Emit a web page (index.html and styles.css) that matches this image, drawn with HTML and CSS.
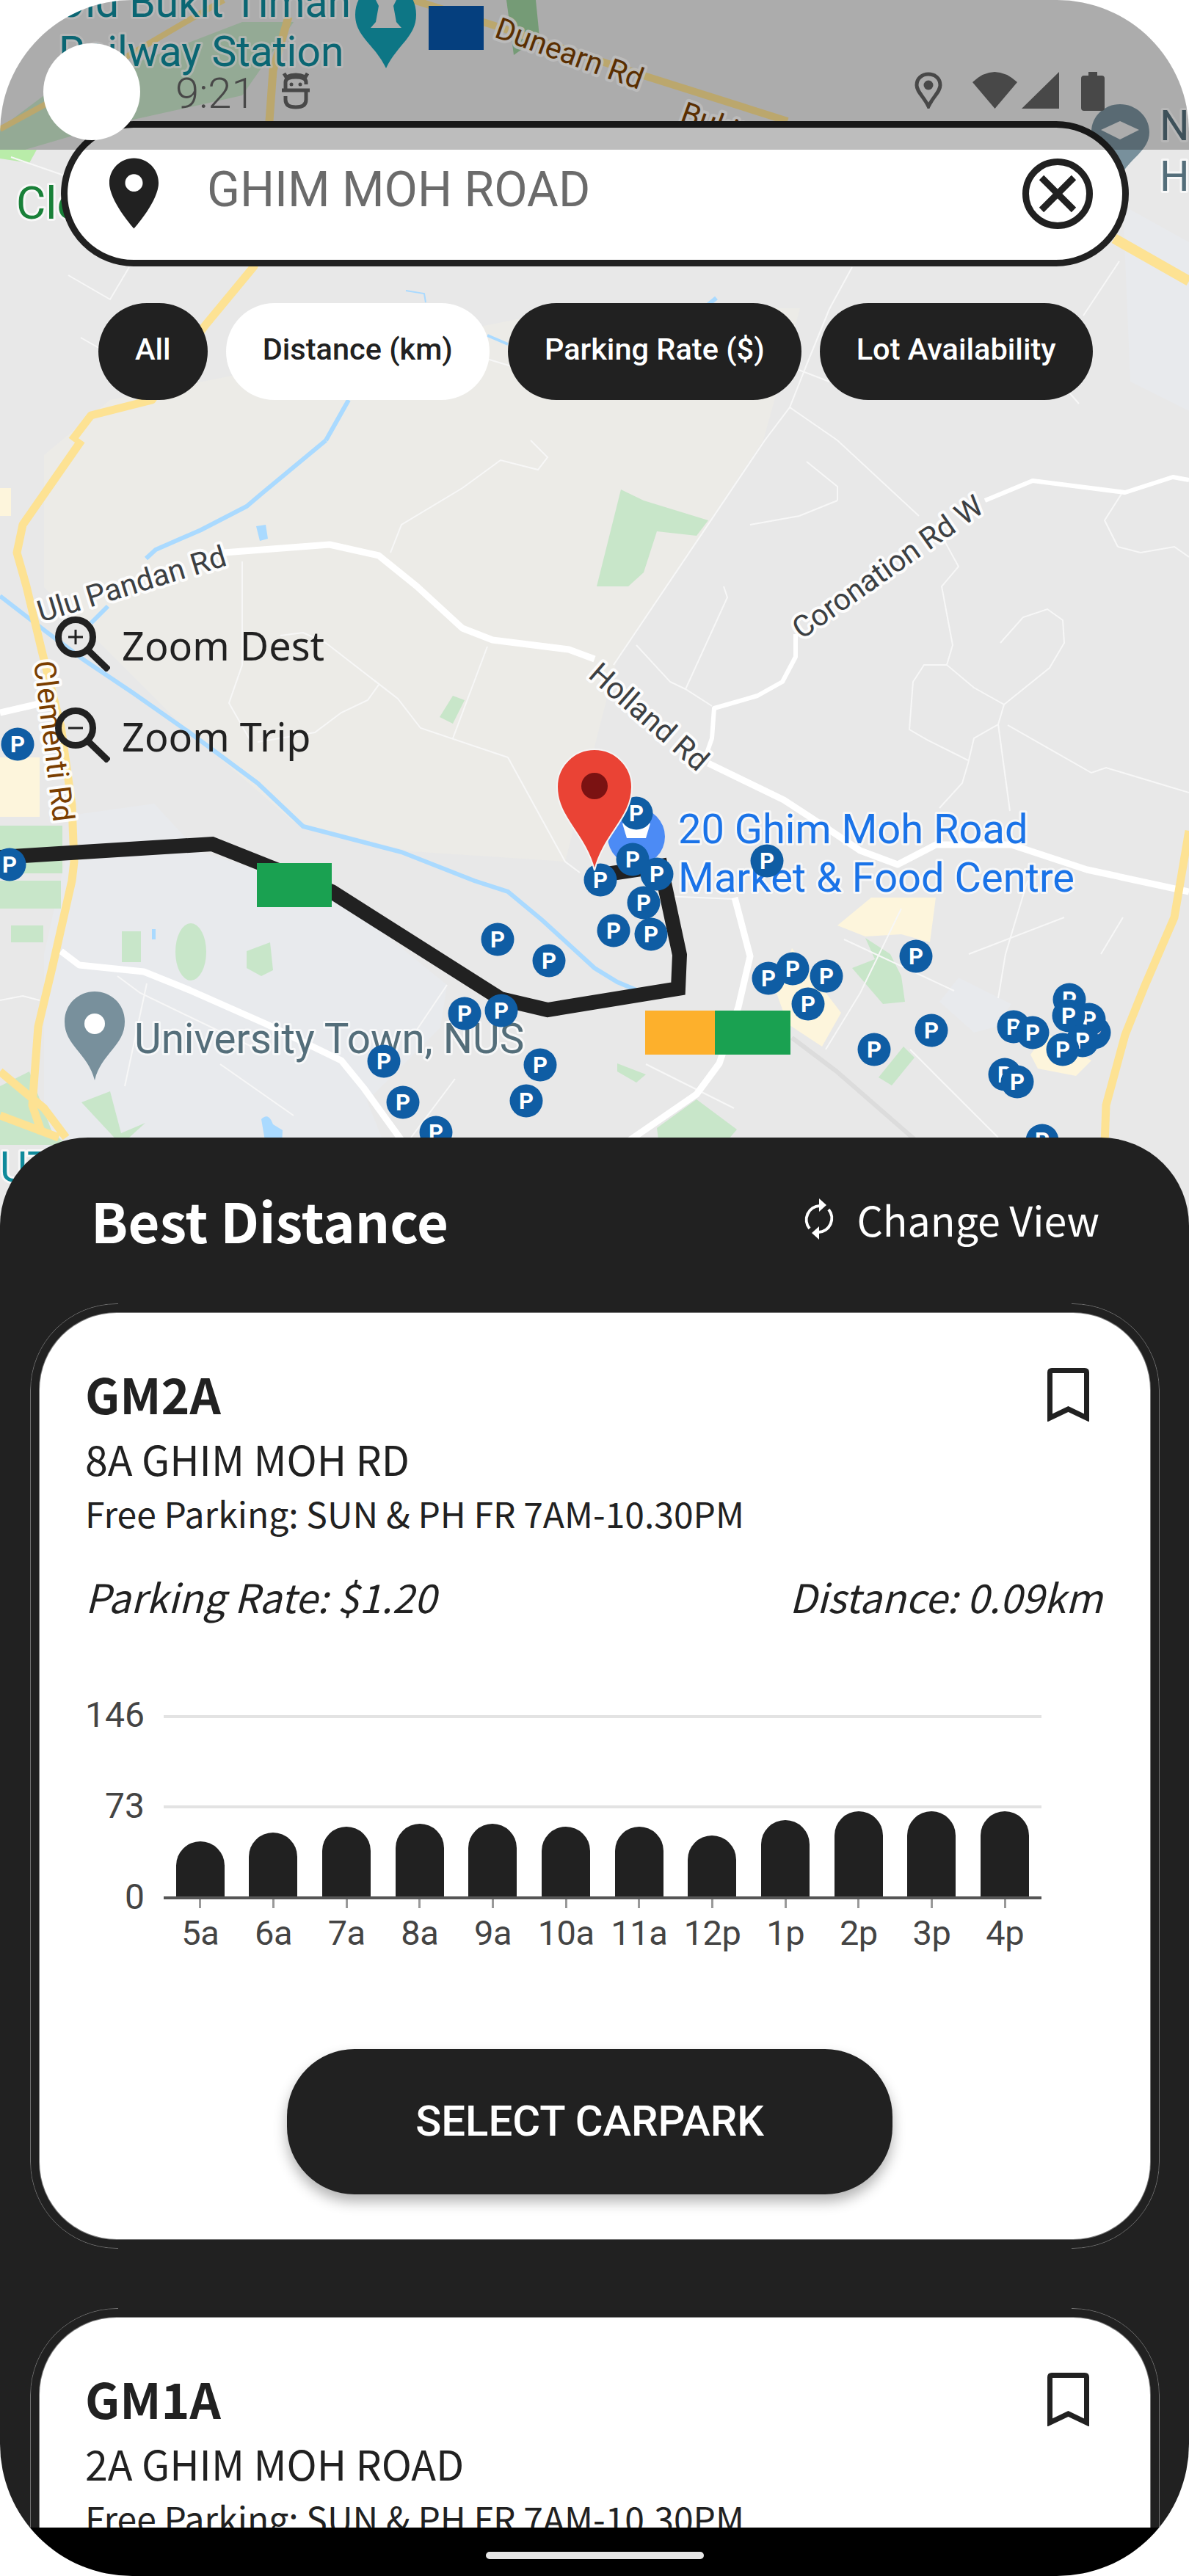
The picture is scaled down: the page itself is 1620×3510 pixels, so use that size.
FILE: index.html
```html
<!DOCTYPE html>
<html lang="en">
<head>
<meta charset="UTF-8">
<meta name="viewport" content="width=device-width, initial-scale=1.0">
<title>Carpark Finder</title>
<link rel="stylesheet" href="styles.css">
</head>
<body>
  <div class="phone">
    <!-- map is a free canvas, everything on it sits at its own coordinates -->
    <svg class="map" viewBox="0 0 1620 3510" xmlns="http://www.w3.org/2000/svg">
      <defs>
        <g id="pk">
          <circle r="22.5" fill="#0f5da4"/>
          <text class="pk-letter" y="11">P</text>
        </g>
      </defs>
      <rect width="1620" height="1700" fill="#e8e8e8"/>
      <!-- land use -->
      <g fill="#ecebe7">
        <path d="M150 545 L780 420 L1090 420 L1040 600 L840 900 L770 1174 L560 1160 L400 1120 L250 990 L60 800 L60 620 Z"/>
      </g>
      <g fill="#e8eaed">
        <path d="M103 1110 L210 1095 L270 1160 L452 1215 L609 1342 L600 1400 L500 1500 L548 1620 L60 1620 L60 1300 Z"/>
        <path d="M1280 1365 L1306 1332 L1378 1368 L1357 1399 L1327 1407 Z"/>
        <path d="M1530 280 L1620 330 L1620 560 L1540 520 Z"/>
      </g>
      <g fill="#fdf5dc">
        <path d="M0 1032 H54 V1113 H0 Z"/>
        <path d="M0 665 H15 V703 H0 Z"/>
        <path d="M1141 1261 L1187 1223 L1275 1223 L1267 1284 L1228 1273 L1179 1276 Z"/>
        <path d="M1058 1353 L1079 1292 L1146 1380 L1120 1426 L1073 1395 Z"/>
        <path d="M1404 1437 L1425 1407 L1487 1445 L1466 1466 L1414 1456 Z"/>
      </g>
      <g fill="#c8e6c9">
        <path d="M846 667 L877 682 L965 709 L949 730 L895 724 L877 780 L856 799 L813 799 Z"/>
        <path d="M617 948 L633 954 L617 986 L599 977 Z"/>
        <path d="M166 1269 H192 V1311 H166 Z"/>
        <ellipse cx="260" cy="1297" rx="21" ry="39"/>
        <path d="M336 1296 L368 1284 L372 1322 L356 1330 L336 1319 Z"/>
        <path d="M111 1502 L150 1487 L165 1544 L198 1530 L165 1560 Z"/>
        <path d="M0 1200 H83 V1238 H0 Z"/>
        <path d="M15 1261 H59 V1284 H15 Z"/>
        <path d="M0 1480 L40 1460 L70 1540 L90 1560 L0 1560 Z"/>
        <path d="M1179 1278 L1213 1300 L1228 1330 L1233 1365 L1203 1368 L1161 1319 L1192 1307 Z"/>
        <path d="M1231 1426 L1246 1441 L1215 1479 L1197 1468 Z"/>
        <path d="M949 1498 L1004 1539 L986 1560 L898 1560 L895 1537 Z"/>
        <path d="M841 1449 L880 1464 L867 1475 L841 1460 Z"/>
        <path d="M0 1125 H85 V1190 H0 Z" fill="#c5e6c6"/>
        <path d="M690 0 H730 L735 50 L700 75 Z" fill="#9ed19f"/>
        <path d="M0 175 L60 130 L200 80 L330 30 L400 30 L330 130 L150 170 L0 214 Z"/>
        <path d="M0 204 H50 L40 222 L0 216 Z" fill="#b9eca9"/>
      </g>
      <!-- water -->
      <g fill="none" stroke="#aadaff" stroke-width="6">
        <path d="M444 600 L403 634 L356 673 L336 690 L274 722 L212 749 L199 761"/>
        <path d="M147 826 L124 849"/>
        <path d="M0 812 L62 860 L114 899 L181 944 L258 998 L351 1067 L413 1126 L547 1161 L646 1200 L692 1215 L739 1254 L810 1319 L841 1338 L867 1349"/>
        <path d="M444 600 L475 545"/>
        <path d="M664 457 L692 469" stroke-width="4"/>
        <path d="M553 396 L578 400 L580 412" stroke-width="2"/>
        <path d="M965 415 L976 406" stroke-width="6"/>
      </g>
      <path d="M349 717 L362 715 L365 734 L354 737 Z" fill="#aadaff"/>
      <path d="M356 1525 Q366 1515 372 1532 L385 1540 L384 1560 L362 1560 Z" fill="#aadaff"/>
      <path d="M207 1266 H212 V1280 H207 Z" fill="#aadaff"/>
      <!-- minor roads -->
      <g fill="none" stroke="#f7f7f7" stroke-width="2">
        <path d="M93 375 L150 408 L176 364"/>
        <path d="M15 214 L90 240"/>
        <path d="M1161 364 L1130 421 L1099 497 L1076 555 L1042 600 L836 906"/>
        <path d="M1076 555 L1141 600 L1252 703"/>
        <path d="M1476 430 L1525 356"/>
        <path d="M1283 730 L1306 772 L1283 799 L1298 879 L1290 906 L1327 937 L1368 960 L1360 987 L1327 1006 L1319 1040 L1311 1067 L1280 1101"/>
        <path d="M1360 987 L1376 1105"/>
        <path d="M1373 988 L1487 1053 L1507 1046 L1620 1080"/>
        <path d="M1523 745 L1505 709 L1528 673"/>
        <path d="M1523 745 L1554 753 L1600 745 L1620 759"/>
        <path d="M1368 960 L1430 910 L1450 876 L1448 845 L1427 830 L1394 841 L1363 876"/>
        <path d="M1141 682 L1089 703 L1022 715"/>
        <path d="M1290 906 L1259 906 L1244 929 L1239 994 L1265 1009 L1319 1036"/>
        <path d="M970 962 L934 939 L913 929 L867 879"/>
        <path d="M934 939 L991 814 L986 799"/>
        <path d="M1099 629 L1141 663 L1141 682"/>
        <path d="M692 1032 L573 992 L542 952 L444 876 L413 862 L382 866"/>
        <path d="M692 1032 L770 1174 L790 1189"/>
        <path d="M516 933 L501 954 L465 971 L429 998 L351 1011"/>
        <path d="M330 765 L330 906 L312 958 L341 1009"/>
        <path d="M664 881 L617 1006"/>
        <path d="M630 665 L547 715 L532 753"/>
        <path d="M630 665 L682 627 L733 640 L746 623 L723 600"/>
        <path d="M0 1363 L31 1357 L54 1363"/>
        <path d="M160 1330 L191 1353 L351 1430"/>
        <path d="M609 1342 L568 1403"/>
        <path d="M1125 1430 L1172 1353 L1228 1238"/>
        <path d="M880 1220 L1000 1225 M880 1450 L960 1490 L1000 1510"/>
        <path d="M1150 1280 L1300 1350 M1320 1300 L1450 1250 M1500 1300 L1530 1250"/>
        <path d="M1400 1200 L1370 1300 L1360 1360 M1240 1430 L1360 1550"/>
        <path d="M110 460 L180 500 M420 480 L520 420 M720 430 L780 520 M600 470 L700 500"/>
        <path d="M850 520 L1000 440 M1000 470 L1130 520 M1250 470 L1350 520 M1400 470 L1470 550"/>
        <path d="M170 1480 L200 1340 M300 1450 L400 1520 M620 1470 L560 1550"/>
      </g>
      <!-- main roads -->
      <g fill="none" stroke="#fff" stroke-width="9" stroke-linejoin="round">
        <path d="M305 753 L449 742 L516 757 L568 799 L630 856 L671 872 L775 885 L810 898"/>
        <path d="M965 1040 L1068 1090 L1120 1124 L1172 1159 L1223 1178 L1275 1151 L1378 1151 L1481 1185 L1620 1215"/>
        <path d="M83 1296 L108 1315 L196 1324 L258 1349 L362 1395 L465 1445 L496 1483 L548 1555"/>
        <path d="M0 971 L57 958"/>
        <path d="M1001 1223 L1022 1303 L1006 1372 L980 1449 L949 1491 L856 1555"/>
        <path d="M924 1410 L1006 1410 L1060 1420" stroke-width="6"/>
      </g>
      <g fill="none" stroke="#fff" stroke-width="6" stroke-linejoin="round">
        <path d="M1342 682 L1407 655 L1533 671 L1598 650 L1620 654"/>
        <path d="M1084 864 L1084 895 L1066 929 L1032 948 L973 965 L970 1006 L962 1029"/>
        <path d="M1079 1414 L1140 1460 L1249 1555" stroke="#dcdcdc"/>
      </g>
      <!-- motorways -->
      <g fill="none" stroke="#fde293" stroke-width="11" stroke-linejoin="round">
        <path d="M98 600 L124 566 L207 545 L279 444 L346 363 L367 165 L372 96 L393 23"/>
        <path d="M111 600 L31 715 L23 753 L36 799 L57 887 L83 990 L98 1097 L101 1174 L98 1200 L72 1315 L52 1399 L44 1506 L57 1544"/>
        <path d="M0 176 L62 142 L258 27 L305 0" stroke-width="8"/>
        <path d="M563 0 L671 34 L877 103 L1073 165" stroke-width="10"/>
        <path d="M1518 325 L1620 383" stroke-width="14"/>
        <path d="M1620 1132 L1600 1250 L1559 1345 L1533 1410 L1507 1506 L1505 1560"/>
        <path d="M0 1460 L60 1510 L90 1550 M0 1520 L80 1550"/>
      </g>
      <!-- labels -->
      <text class="lbl lbl-teal" x="77" y="23">Old Bukit Timah</text>
      <text class="lbl lbl-teal" x="80" y="90">Railway Station</text>
      <text class="lbl lbl-road-brown" transform="translate(672 50) rotate(20)">Dunearn Rd</text>
      <text class="lbl lbl-road-brown" transform="translate(925 165) rotate(20)">Bukit Timah</text>
      <text class="lbl lbl-green" x="22" y="298">Clementi</text>
      <text class="lbl lbl-slate" x="1580" y="191">N</text>
      <text class="lbl lbl-slate" x="1580" y="260">H</text>
      <text class="lbl lbl-road" transform="translate(56 848) rotate(-17)">Ulu Pandan Rd</text>
      <text class="lbl lbl-road-brown" transform="translate(46 902) rotate(83)">Clementi Rd</text>
      <text class="lbl lbl-road" transform="translate(1092 872) rotate(-35)">Coronation Rd W</text>
      <text class="lbl lbl-road" transform="translate(800 922) rotate(41)">Holland Rd</text>
      <text class="lbl lbl-place" x="924" y="1149">20 Ghim Moh Road</text>
      <text class="lbl lbl-place" x="924" y="1215">Market &amp; Food Centre</text>
      <text class="lbl lbl-slate lbl-campus" x="183" y="1435">University Town, NUS</text>
      <text class="lbl lbl-teal" x="0" y="1610">UT</text>
      <!-- poi pins -->
      <path d="M526 93 C510 60 484 50 484 20 C484 -10 510 -25 526 -25 C542 -25 567 -10 567 20 C567 50 542 60 526 93 Z" fill="#12a0b4"/>
      <path d="M505 38 L512 30 L516 8 L512 0 H540 L536 8 L540 30 L547 38 Z" fill="#e8e8e8"/>
      <path d="M1526 241 C1512 215 1487 205 1487 180 C1487 158 1505 142 1526 142 C1547 142 1566 158 1566 180 C1566 205 1540 215 1526 241 Z" fill="#78909c"/>
      <path d="M1500 177 L1526 165 L1552 177 L1526 190 Z" fill="#e8e8e8"/>
      <path d="M129 1472 C120 1435 88 1425 88 1392 C88 1368 107 1351 129 1351 C151 1351 170 1368 170 1392 C170 1425 138 1435 129 1472 Z" fill="#78909c"/>
      <circle cx="129" cy="1395" r="14" fill="#fff"/>
      <circle cx="867" cy="1140" r="39" fill="#4c8bf5"/>
      <path d="M848 1122 H886 L880 1142 H854 Z" fill="#fff"/>
      <!-- route and congestion blocks -->
      <path d="M0 1168 L289 1150 L452 1215 L682 1361 L746 1376 L924 1347 L926 1301 L900 1180 L820 1192" fill="none" stroke="#212121" stroke-width="20" stroke-linejoin="miter"/>
      <rect x="350" y="1176" width="102" height="60" fill="#1aa151"/>
      <rect x="879" y="1377" width="95" height="60" fill="#fdb02c"/>
      <rect x="974" y="1377" width="103" height="60" fill="#1aa151"/>
      <rect x="584" y="8" width="75" height="60" fill="#0755ab"/>
      <!-- parking markers -->
      <use href="#pk" x="24" y="1014"/>
      <use href="#pk" x="13" y="1178"/>
      <use href="#pk" x="867" y="1108"/>
      <use href="#pk" x="862" y="1171"/>
      <use href="#pk" x="1045" y="1173"/>
      <use href="#pk" x="818" y="1199"/>
      <use href="#pk" x="895" y="1191"/>
      <use href="#pk" x="877" y="1230"/>
      <use href="#pk" x="836" y="1268"/>
      <use href="#pk" x="887" y="1273"/>
      <use href="#pk" x="678" y="1280"/>
      <use href="#pk" x="748" y="1309"/>
      <use href="#pk" x="633" y="1381"/>
      <use href="#pk" x="683" y="1377"/>
      <use href="#pk" x="523" y="1446"/>
      <use href="#pk" x="736" y="1451"/>
      <use href="#pk" x="549" y="1502"/>
      <use href="#pk" x="717" y="1500"/>
      <use href="#pk" x="594" y="1543"/>
      <use href="#pk" x="1047" y="1333"/>
      <use href="#pk" x="1080" y="1320"/>
      <use href="#pk" x="1126" y="1330"/>
      <use href="#pk" x="1101" y="1368"/>
      <use href="#pk" x="1248" y="1303"/>
      <use href="#pk" x="1269" y="1404"/>
      <use href="#pk" x="1191" y="1430"/>
      <use href="#pk" x="1381" y="1399"/>
      <use href="#pk" x="1407" y="1407"/>
      <use href="#pk" x="1369" y="1464"/>
      <use href="#pk" x="1386" y="1474"/>
      <use href="#pk" x="1457" y="1362"/>
      <use href="#pk" x="1491" y="1407"/>
      <use href="#pk" x="1484" y="1389"/>
      <use href="#pk" x="1456" y="1384"/>
      <use href="#pk" x="1475" y="1418"/>
      <use href="#pk" x="1448" y="1430"/>
      <use href="#pk" x="1420" y="1554"/>
      <!-- destination pin -->
      <path d="M810 1186 C797 1135 759 1115 759 1072 A51 51 0 0 1 861 1072 C861 1115 823 1135 810 1186 Z" fill="#ea4335" stroke="#f4f4f4" stroke-width="2"/>
      <circle cx="810" cy="1071" r="18" fill="#7b1212"/>
    </svg>

    <div class="status">
      <span class="time">9:21</span>
      <svg class="status-app" viewBox="0 0 38 51">
        <path d="M3 2 L6 7 Q19 1 32 7 L35 2 M5 25 V14 Q5 7 19 7 Q33 7 33 14 V17 M0 25 H38 M33 25 V38 Q33 48 19 48 Q5 48 5 38 V33" fill="none" stroke="currentColor" stroke-width="5"/>
        <circle cx="13" cy="17" r="2.5" fill="currentColor"/>
        <circle cx="25" cy="17" r="2.5" fill="currentColor"/>
      </svg>
      <div class="status-right">
        <svg class="status-pin" viewBox="0 0 38 50">
          <path d="M19 47 C13 34 3 27 3 18 C3 9 10 3 19 3 C28 3 35 9 35 18 C35 27 25 34 19 47 Z" fill="none" stroke="currentColor" stroke-width="5"/>
          <circle cx="19" cy="18" r="6.5" fill="currentColor"/>
        </svg>
        <svg class="status-wifi" viewBox="0 0 61 50"><path d="M0 14 Q30 -14 61 14 L30.5 50 Z" fill="currentColor"/></svg>
        <svg class="status-signal" viewBox="0 0 51 50"><path d="M51 0 V50 H0 Z" fill="currentColor"/></svg>
        <svg class="status-battery" viewBox="0 0 32 53"><path d="M10 0 H22 V5 H28 Q32 5 32 9 V49 Q32 53 28 53 H4 Q0 53 0 49 V9 Q0 5 4 5 H10 Z" fill="currentColor"/></svg>
      </div>
    </div>
    <div class="camera"></div>

    <div class="map-ui">
      <div class="search">
        <svg class="search-pin" viewBox="0 0 24 24"><path d="M12 2C8.13 2 5 5.13 5 9c0 5.25 7 13 7 13s7-7.75 7-13c0-3.87-3.13-7-7-7zm0 9.5c-1.38 0-2.5-1.12-2.5-2.5s1.12-2.5 2.5-2.5 2.5 1.12 2.5 2.5-1.12 2.5-2.5 2.5z"/></svg>
        <span class="search-text">GHIM MOH ROAD</span>
        <svg class="search-clear" viewBox="0 0 96 96">
          <circle cx="48" cy="48" r="43.5" fill="none" stroke="#212121" stroke-width="9"/>
          <path d="M26 26 L70 70 M70 26 L26 70" stroke="#212121" stroke-width="9"/>
        </svg>
      </div>
      <div class="chips">
        <div class="chip">All</div>
        <div class="chip chip-active">Distance (km)</div>
        <div class="chip">Parking Rate ($)</div>
        <div class="chip">Lot Availability</div>
      </div>
      <div class="zoom-list">
        <div class="zoom-item">
          <svg class="zoom-icon" viewBox="0 0 75 75">
            <circle cx="28" cy="28" r="23.5" fill="none" stroke="#212121" stroke-width="9"/>
            <path d="M45 46 L73 73" stroke="#212121" stroke-width="9"/>
            <path d="M18 28 H38 M28 18 V38" stroke="#212121" stroke-width="3"/>
          </svg>
          <span>Zoom Dest</span>
        </div>
        <div class="zoom-item">
          <svg class="zoom-icon" viewBox="0 0 75 75">
            <circle cx="28" cy="28" r="23.5" fill="none" stroke="#212121" stroke-width="9"/>
            <path d="M45 46 L73 73" stroke="#212121" stroke-width="9"/>
            <path d="M18 28 H38" stroke="#212121" stroke-width="3"/>
          </svg>
          <span>Zoom Trip</span>
        </div>
      </div>
    </div>

    <div class="panel">
      <div class="panel-header">
        <h1 class="panel-title">Best Distance</h1>
        <div class="change-view">
          <svg class="sync-icon" viewBox="0 0 42 56">
            <path d="M8 41 A19 19 0 0 1 22 10 M34 15 A19 19 0 0 1 20 46" fill="none" stroke="#fff" stroke-width="4"/>
            <path d="M21 0 V18 L31 9 Z M21 38 V56 L11 47 Z" fill="#fff"/>
          </svg>
          <span>Change View</span>
        </div>
      </div>

      <div class="card-wrap">
        <div class="card">
          <div class="card-top">
            <div class="card-name">GM2A</div>
            <svg class="bookmark" viewBox="0 0 57 73"><path d="M3.5 6 Q3.5 3.5 6 3.5 H51 Q53.5 3.5 53.5 6 V68 L28.5 56 L3.5 68 Z" fill="none" stroke="#212121" stroke-width="7"/></svg>
          </div>
          <div class="card-address">8A GHIM MOH RD</div>
          <div class="card-free">Free Parking: SUN &amp; PH FR 7AM-10.30PM</div>
          <div class="card-meta">
            <span>Parking Rate: $1.20</span>
            <span>Distance: 0.09km</span>
          </div>
          <div class="chart">
            <div class="y-axis"><span>146</span><span>73</span><span>0</span></div>
            <div class="chart-main">
              <div class="plot">
                <div class="grid-line grid-top"></div>
                <div class="grid-line grid-mid"></div>
                <div class="bars">
                  <div class="bar" style="height:75px"></div>
                  <div class="bar" style="height:87px"></div>
                  <div class="bar" style="height:95px"></div>
                  <div class="bar" style="height:99px"></div>
                  <div class="bar" style="height:99px"></div>
                  <div class="bar" style="height:95px"></div>
                  <div class="bar" style="height:95px"></div>
                  <div class="bar" style="height:83px"></div>
                  <div class="bar" style="height:104px"></div>
                  <div class="bar" style="height:116px"></div>
                  <div class="bar" style="height:116px"></div>
                  <div class="bar" style="height:116px"></div>
                </div>
              </div>
              <div class="x-axis">
                <span>5a</span><span>6a</span><span>7a</span><span>8a</span><span>9a</span><span>10a</span>
                <span>11a</span><span>12p</span><span>1p</span><span>2p</span><span>3p</span><span>4p</span>
              </div>
            </div>
          </div>
          <div class="select-btn">SELECT CARPARK</div>
        </div>
      </div>

      <div class="card-wrap">
        <div class="card">
          <div class="card-top">
            <div class="card-name">GM1A</div>
            <svg class="bookmark" viewBox="0 0 57 73"><path d="M3.5 6 Q3.5 3.5 6 3.5 H51 Q53.5 3.5 53.5 6 V68 L28.5 56 L3.5 68 Z" fill="none" stroke="#212121" stroke-width="7"/></svg>
          </div>
          <div class="card-address">2A GHIM MOH ROAD</div>
          <div class="card-free">Free Parking: SUN &amp; PH FR 7AM-10.30PM</div>
        </div>
      </div>
    </div>

    <div class="navbar"><div class="home-bar"></div></div>
  </div>
</body>
</html>
```

FILE: styles.css
```css
html, body {
  margin: 0;
  padding: 0;
  background: #fff;
}

.phone {
  position: relative;
  width: 1620px;
  height: 3510px;
  overflow: hidden;
  border-radius: 180px;
  display: flex;
  flex-direction: column;
  font-family: Roboto, sans-serif;
  color: #212121;
}

/* map */
.map {
  position: absolute;
  top: 0;
  left: 0;
  width: 1620px;
  height: 3510px;
}

.lbl {
  font-family: Roboto, sans-serif;
  font-size: 57px;
  paint-order: stroke;
  stroke: rgba(255, 255, 255, 0.65);
  stroke-width: 6px;
  stroke-linejoin: round;
}

.lbl-teal { fill: #0e8a9b; }
.lbl-green { fill: #188038; font-size: 62px; }
.lbl-slate { fill: #546e7a; }
.lbl-campus { font-size: 56.5px; }
.lbl-place { fill: #1a73e8; font-size: 56px; }
.lbl-road { fill: #3c4043; font-size: 41px; stroke: rgba(255, 255, 255, 0.9); stroke-width: 8px; }
.lbl-road-brown { fill: #7a3e00; font-size: 41px; stroke: rgba(255, 255, 255, 0.9); stroke-width: 8px; }

.pk-letter {
  font-family: Roboto, sans-serif;
  font-size: 31px;
  font-weight: 700;
  fill: #fff;
  text-anchor: middle;
}

/* status bar, dims the map and the top of the search box */
.status {
  position: absolute;
  top: 0;
  left: 0;
  right: 0;
  height: 204px;
  box-sizing: border-box;
  padding: 98px 115px 0 239px;
  display: flex;
  align-items: flex-start;
  background: rgba(0, 0, 0, 0.26);
  color: #484848;
  z-index: 3;
}

.time {
  font-size: 58px;
  font-weight: 300;
  line-height: 58px;
}

.status-app {
  width: 38px;
  height: 51px;
  margin-left: 36px;
}

.status-right {
  margin-left: auto;
  display: flex;
  align-items: flex-start;
}

.status-pin { width: 38px; height: 50px; }
.status-wifi { width: 61px; height: 50px; margin-left: 41px; }
.status-signal { width: 51px; height: 50px; margin-left: 6px; }
.status-battery { width: 32px; height: 53px; margin-left: 30px; }

.camera {
  position: absolute;
  top: 59px;
  left: 59px;
  width: 132px;
  height: 132px;
  border-radius: 50%;
  background: #fff;
  z-index: 4;
}

/* controls on top of the map */
.map-ui {
  position: relative;
  height: 1550px;
  flex-shrink: 0;
  box-sizing: border-box;
  padding: 165px 0 0 83px;
  z-index: 2;
}

.search {
  width: 1455px;
  height: 198px;
  box-sizing: border-box;
  border: 9px solid #212121;
  border-radius: 99px;
  background: #fff;
  display: flex;
  align-items: center;
  padding-left: 33px;
  padding-right: 40px;
}

.search-pin {
  width: 115px;
  height: 115px;
  fill: #212121;
  margin-top: -1px;
}

.search-text {
  font-size: 66px;
  color: #6b6b6b;
  margin-left: 42px;
  margin-top: -12px;
}

.search-clear {
  width: 96px;
  height: 96px;
  margin-left: auto;
}

.chips {
  display: flex;
  gap: 25px;
  margin: 50px 0 0 51px;
}

.chip {
  height: 132px;
  box-sizing: border-box;
  padding: 0 50px;
  border-radius: 66px;
  background: #212121;
  color: #fff;
  font-size: 41.5px;
  font-weight: 500;
  line-height: 126px;
}

.chip-active {
  background: #fff;
  color: #212121;
}

.zoom-list {
  margin: 295px 0 0 -8px;
}

.zoom-item {
  height: 124px;
  display: flex;
  align-items: flex-start;
  font-family: "Noto Sans", sans-serif;
  font-size: 54px;
  line-height: 78px;
}

.zoom-icon {
  width: 75px;
  height: 75px;
  margin-right: 16px;
}

/* bottom sheet */
.panel {
  position: relative;
  flex: 1;
  min-height: 0;
  overflow: hidden;
  border-radius: 120px 120px 0 0;
  background: #212121;
  font-family: "Noto Sans CJK SC", "Noto Sans", sans-serif;
  z-index: 2;
}

.panel-header {
  height: 226px;
  box-sizing: border-box;
  padding: 0 122px 4px 124px;
  display: flex;
  align-items: center;
  justify-content: space-between;
  color: #fff;
}

.panel-title {
  margin: 0;
  font-size: 74px;
  font-weight: 700;
}

.change-view {
  display: flex;
  align-items: center;
  font-size: 55.5px;
}

.sync-icon {
  width: 42px;
  height: 56px;
  margin-right: 30px;
}

.card-wrap {
  position: relative;
  margin: 0 40px 81px 41px;
  padding: 13px;
}

/* thin ring round the card, only shows at the corners and the sides */
.card-wrap::before {
  content: "";
  position: absolute;
  top: 0;
  left: 0;
  right: 0;
  bottom: 0;
  border: 1px solid #6f6f6f;
  border-radius: 118px;
  -webkit-mask-image: linear-gradient(to right, #000 120px, transparent 120px, transparent calc(100% - 120px), #000 calc(100% - 120px));
  mask-image: linear-gradient(to right, #000 120px, transparent 120px, transparent calc(100% - 120px), #000 calc(100% - 120px));
}

.card {
  position: relative;
  height: 1262px;
  box-sizing: border-box;
  padding: 69px 83px 0 62px;
  border-radius: 105px;
  background: #fff;
  box-shadow: 0 0 0 1px #777;
}

.card-top {
  display: flex;
  justify-content: space-between;
  align-items: flex-start;
}

.card-name {
  font-size: 66px;
  font-weight: 700;
  line-height: 80px;
}

.bookmark {
  width: 57px;
  height: 73px;
  margin-top: 6px;
}

.card-address {
  font-size: 55.5px;
  line-height: 64px;
  margin-top: 17px;
}

.card-free {
  font-size: 48px;
  line-height: 64px;
  margin-top: 10px;
}

.card-meta {
  display: flex;
  justify-content: space-between;
  margin: 50px -18px 0 0;
  font-size: 54px;
  font-style: italic;
  line-height: 64px;
}

.chart {
  display: flex;
  margin-top: 130px;
  font-family: Roboto, sans-serif;
  color: #444;
}

.y-axis {
  width: 81px;
  height: 248px;
  margin-right: 26px;
  display: flex;
  flex-direction: column;
  justify-content: space-between;
  align-items: flex-end;
  font-size: 48px;
  line-height: 0;
}

.chart-main {
  width: 1196px;
}

.plot {
  position: relative;
  height: 247px;
  border-bottom: 4px solid #555;
}

.grid-line {
  position: absolute;
  left: 0;
  right: 0;
  height: 4px;
  background: #e3e3e3;
}

.grid-top { top: 0; }
.grid-mid { top: 123px; }

.bars {
  position: absolute;
  left: 0;
  right: 0;
  bottom: 0;
  display: grid;
  grid-template-columns: repeat(12, 1fr);
  align-items: end;
  justify-items: center;
}

.bar {
  width: 66px;
  border-radius: 33px 33px 0 0;
  background: #212121;
}

.x-axis {
  display: grid;
  grid-template-columns: repeat(12, 1fr);
  text-align: center;
  font-size: 47px;
  line-height: 54px;
  letter-spacing: -0.5px;
}

.x-axis span {
  display: flex;
  flex-direction: column;
  align-items: center;
}

.x-axis span::before {
  content: "";
  width: 3px;
  height: 12px;
  background: #999;
  margin-bottom: 7px;
}

.select-btn {
  width: 825px;
  height: 198px;
  box-sizing: border-box;
  margin: 131px 0 0 275px;
  border-radius: 92px;
  background: #212121;
  color: #fff;
  font-family: Roboto, sans-serif;
  font-size: 58px;
  font-weight: 500;
  line-height: 196px;
  text-align: center;
  box-shadow: 0 10px 18px rgba(0, 0, 0, 0.3);
}

/* android nav bar */
.navbar {
  position: relative;
  height: 66px;
  flex-shrink: 0;
  background: #000;
  display: flex;
  justify-content: center;
  padding-top: 33px;
  box-sizing: border-box;
  z-index: 2;
}

.home-bar {
  width: 297px;
  height: 10px;
  border-radius: 5px;
  background: #e6e6e6;
}
```
